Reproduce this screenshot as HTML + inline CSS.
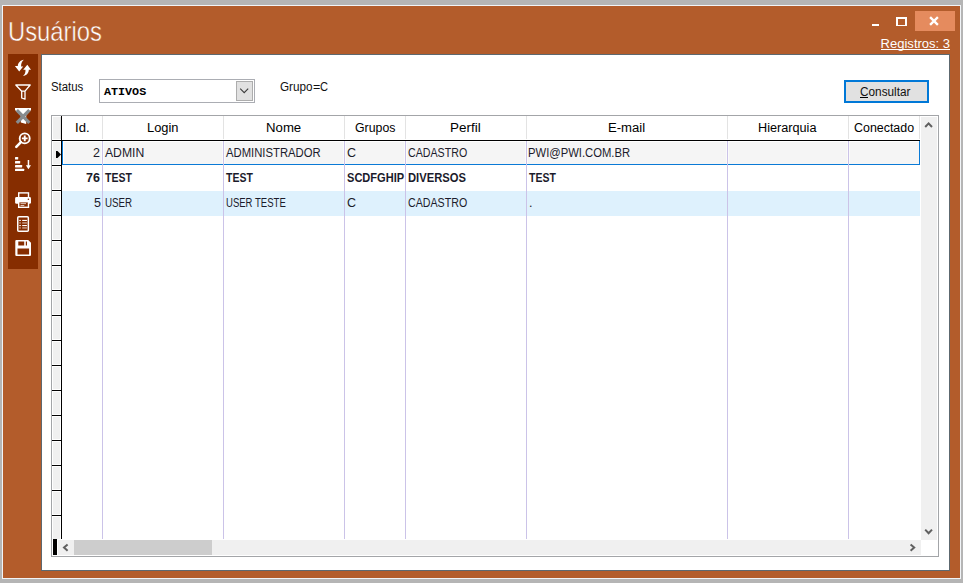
<!DOCTYPE html>
<html><head><meta charset="utf-8"><style>
html,body{margin:0;padding:0;width:963px;height:583px;overflow:hidden;background:#b5b5b5}
svg{display:block;font-family:"Liberation Sans",sans-serif}
text{white-space:pre}
</style></head><body>
<svg width="963" height="583" viewBox="0 0 963 583">
<defs><clipPath id="cg"><rect x="345" y="160" width="59" height="30"/></clipPath></defs>
<rect x="0" y="0" width="963" height="583" fill="#b5b5b5" />
<rect x="2" y="5" width="959" height="574" fill="#f1f4f7" />
<rect x="3" y="6" width="957" height="572" fill="#b35c2b" />
<rect x="872" y="24" width="7" height="2" fill="#fff" />
<rect x="896" y="17" width="11" height="9" fill="#fff" />
<rect x="898" y="19" width="7" height="6" fill="#b35c2b" />
<rect x="915" y="11" width="40" height="20" fill="#e58b5e" />
<path d="M930.9 17.9L937.1 24.1M937.1 17.9L930.9 24.1" stroke="#fff" stroke-width="2.3" stroke-linecap="square"/>
<rect x="881" y="49" width="69" height="1" fill="#fff" />
<rect x="8" y="54" width="30" height="215" fill="#862d00" />
<g fill="#fff"><path d="M23.8 59.8C20.4 60.3 17.9 62.9 17.8 66L14.9 66L19.2 71.6L23.2 66.4L21.1 66.4C21.0 63.6 22.0 61.3 23.8 59.8Z"/><path d="M23.0 76.0C26.6 75.5 28.8 72.9 28.8 69.7L31.0 69.7L27.3 64.8L23.2 69.7L25.5 69.7C25.6 72.4 24.8 74.6 23.0 76.0Z"/></g>
<path d="M15.8 85H30.2L25 91.2V99.2L21.7 98V91.2Z M21.7 91.2H25" fill="none" stroke="#fff" stroke-width="1.3" stroke-linejoin="round"/>
<path d="M15 108H31V110L26.2 115.5V124L20.8 122.5V115.5L15 110Z" fill="#fff"/>
<path d="M16.8 110.2L29.4 122.8M29.4 110.2L16.8 122.8" stroke="#878c8f" stroke-width="3.3"/>
<circle cx="24.7" cy="138.4" r="5" fill="none" stroke="#fff" stroke-width="1.9"/><path d="M21.9 138.4H27.6M24.75 135.6V141.2" stroke="#fff" stroke-width="1.9"/><path d="M20.9 142.2L16.3 146.8" stroke="#fff" stroke-width="2.6" stroke-linecap="round"/>
<g fill="#fff"><rect x="15" y="157" width="3.2" height="2.6" rx="0.6"/><rect x="15" y="161" width="5.2" height="2.6" rx="0.6"/><rect x="15" y="164.9" width="7.2" height="2.5" rx="0.6"/><rect x="15" y="168.7" width="9.2" height="2.4" rx="0.6"/><rect x="27.7" y="160" width="1.5" height="6"/><path d="M25.9 165.3H31L28.45 169.2Z"/></g>
<g><rect x="18.7" y="192.9" width="9.8" height="5" fill="none" stroke="#fff" stroke-width="1.4"/><rect x="15.1" y="197" width="15.9" height="6.8" rx="1.4" fill="#fff"/><rect x="18.7" y="201.7" width="9.8" height="5.6" fill="#862d00" stroke="#fff" stroke-width="1.4"/><rect x="20.5" y="203.2" width="5.5" height="0.9" fill="#fff" opacity="0.8"/><rect x="20.5" y="205" width="3.8" height="0.9" fill="#fff" opacity="0.8"/><circle cx="28.4" cy="199.2" r="0.8" fill="#862d00"/></g>
<g><rect x="17.75" y="216.75" width="10.6" height="14.6" rx="1" fill="none" stroke="#fff" stroke-width="1.5"/><g fill="#fff"><rect x="19.3" y="219.9" width="1.5" height="1.1"/><rect x="22.2" y="219.9" width="4.7" height="1.1"/><rect x="19.3" y="222.4" width="1.5" height="1.1" opacity="0.7"/><rect x="22.2" y="222.4" width="4.7" height="1.1" opacity="0.7"/><rect x="19.3" y="225" width="1.5" height="1.1"/><rect x="22.2" y="225" width="4.7" height="1.1"/><rect x="19.3" y="227.4" width="1.5" height="1.1" opacity="0.7"/><rect x="22.2" y="227.4" width="4.7" height="1.1" opacity="0.7"/></g></g>
<path fill="#fff" fill-rule="evenodd" d="M15.3 241.1Q15.3 240 16.4 240H28.2L31 242.8V254.9Q31 256 29.9 256H16.4Q15.3 256 15.3 254.9ZM18.3 241.4H24.2V245.6H18.3Z M25.8 241.4H27V245.6H25.8Z M17.5 248.4H29.1V254.6H17.5Z"/>
<rect x="41" y="54" width="909" height="517" fill="#5d686f" />
<rect x="42" y="55" width="907" height="515" fill="#ffffff" />
<rect x="99" y="79" width="156" height="24" fill="#abadb3" />
<rect x="100" y="80" width="154" height="22" fill="#fff" />
<rect x="236" y="81" width="17" height="20" fill="#adadad" />
<rect x="237" y="82" width="15" height="18" fill="#e1e1e1" />
<path d="M240.2 88.6L244.2 92.6L248.2 88.6" fill="none" stroke="#3c3c3c" stroke-width="1.1"/>
<rect x="844" y="80" width="85" height="23" fill="#0078d7" />
<rect x="846" y="82" width="81" height="19" fill="#e1e1e1" />
<rect x="860" y="97" width="8" height="1" fill="#000" />
<rect x="51" y="115" width="888" height="442" fill="#a3a5a8" />
<rect x="52" y="116" width="886" height="440" fill="#ffffff" />
<rect x="62" y="141" width="858" height="24" fill="#0a7ad6" />
<rect x="63" y="141" width="856" height="23" fill="#ffffff" />
<rect x="64" y="142" width="855" height="22" fill="#f5f5f5" />
<rect x="101" y="142" width="3" height="22" fill="#fbfbfb" />
<rect x="222" y="142" width="3" height="22" fill="#fbfbfb" />
<rect x="343" y="142" width="3" height="22" fill="#fbfbfb" />
<rect x="404" y="142" width="3" height="22" fill="#fbfbfb" />
<rect x="525" y="142" width="3" height="22" fill="#fbfbfb" />
<rect x="726" y="142" width="3" height="22" fill="#fbfbfb" />
<rect x="847" y="142" width="3" height="22" fill="#fbfbfb" />
<rect x="62" y="164" width="858" height="1" fill="#0a7ad6" />
<rect x="62" y="141" width="1" height="24" fill="#0a7ad6" />
<rect x="919" y="141" width="1" height="24" fill="#0a7ad6" />
<rect x="62" y="191" width="858" height="25" fill="#def1fd" />
<rect x="102" y="116" width="1" height="23" fill="#e3e3e3" />
<rect x="223" y="116" width="1" height="23" fill="#e3e3e3" />
<rect x="344" y="116" width="1" height="23" fill="#e3e3e3" />
<rect x="405" y="116" width="1" height="23" fill="#e3e3e3" />
<rect x="526" y="116" width="1" height="23" fill="#e3e3e3" />
<rect x="727" y="116" width="1" height="23" fill="#e3e3e3" />
<rect x="848" y="116" width="1" height="23" fill="#e3e3e3" />
<rect x="919" y="116" width="1" height="23" fill="#e3e3e3" />
<rect x="102" y="141" width="1" height="398" fill="#cbc3e8" />
<rect x="223" y="141" width="1" height="398" fill="#cbc3e8" />
<rect x="344" y="141" width="1" height="398" fill="#cbc3e8" />
<rect x="405" y="141" width="1" height="398" fill="#cbc3e8" />
<rect x="526" y="141" width="1" height="398" fill="#cbc3e8" />
<rect x="727" y="141" width="1" height="398" fill="#cbc3e8" />
<rect x="848" y="141" width="1" height="398" fill="#cbc3e8" />
<rect x="52" y="116" width="9" height="24" fill="#ffffff" />
<rect x="53" y="117" width="7" height="22" fill="#f0f0f0" />
<rect x="60" y="117" width="1" height="22" fill="#e2e2e2" />
<rect x="52" y="141" width="9" height="24" fill="#ffffff" />
<rect x="53" y="142" width="7" height="22" fill="#f0f0f0" />
<rect x="52" y="165" width="9" height="1" fill="#000" />
<rect x="52" y="166" width="9" height="24" fill="#ffffff" />
<rect x="53" y="167" width="7" height="22" fill="#f0f0f0" />
<rect x="52" y="190" width="9" height="1" fill="#000" />
<rect x="52" y="191" width="9" height="24" fill="#ffffff" />
<rect x="53" y="192" width="7" height="22" fill="#f0f0f0" />
<rect x="52" y="215" width="9" height="1" fill="#000" />
<rect x="52" y="216" width="9" height="24" fill="#ffffff" />
<rect x="53" y="217" width="7" height="22" fill="#f0f0f0" />
<rect x="52" y="240" width="9" height="1" fill="#000" />
<rect x="52" y="241" width="9" height="24" fill="#ffffff" />
<rect x="53" y="242" width="7" height="22" fill="#f0f0f0" />
<rect x="52" y="265" width="9" height="1" fill="#000" />
<rect x="52" y="266" width="9" height="24" fill="#ffffff" />
<rect x="53" y="267" width="7" height="22" fill="#f0f0f0" />
<rect x="52" y="290" width="9" height="1" fill="#000" />
<rect x="52" y="291" width="9" height="24" fill="#ffffff" />
<rect x="53" y="292" width="7" height="22" fill="#f0f0f0" />
<rect x="52" y="315" width="9" height="1" fill="#000" />
<rect x="52" y="316" width="9" height="24" fill="#ffffff" />
<rect x="53" y="317" width="7" height="22" fill="#f0f0f0" />
<rect x="52" y="340" width="9" height="1" fill="#000" />
<rect x="52" y="341" width="9" height="24" fill="#ffffff" />
<rect x="53" y="342" width="7" height="22" fill="#f0f0f0" />
<rect x="52" y="365" width="9" height="1" fill="#000" />
<rect x="52" y="366" width="9" height="24" fill="#ffffff" />
<rect x="53" y="367" width="7" height="22" fill="#f0f0f0" />
<rect x="52" y="390" width="9" height="1" fill="#000" />
<rect x="52" y="391" width="9" height="24" fill="#ffffff" />
<rect x="53" y="392" width="7" height="22" fill="#f0f0f0" />
<rect x="52" y="415" width="9" height="1" fill="#000" />
<rect x="52" y="416" width="9" height="24" fill="#ffffff" />
<rect x="53" y="417" width="7" height="22" fill="#f0f0f0" />
<rect x="52" y="440" width="9" height="1" fill="#000" />
<rect x="52" y="441" width="9" height="24" fill="#ffffff" />
<rect x="53" y="442" width="7" height="22" fill="#f0f0f0" />
<rect x="52" y="465" width="9" height="1" fill="#000" />
<rect x="52" y="466" width="9" height="24" fill="#ffffff" />
<rect x="53" y="467" width="7" height="22" fill="#f0f0f0" />
<rect x="52" y="490" width="9" height="1" fill="#000" />
<rect x="52" y="491" width="9" height="24" fill="#ffffff" />
<rect x="53" y="492" width="7" height="22" fill="#f0f0f0" />
<rect x="52" y="515" width="9" height="1" fill="#000" />
<rect x="52" y="516" width="9" height="23" fill="#ffffff" />
<rect x="53" y="517" width="7" height="22" fill="#f0f0f0" />
<rect x="61" y="116" width="1" height="423" fill="#000" />
<rect x="52" y="140" width="868" height="1" fill="#000" />
<path d="M56 151H57.5L61 154.5L57.5 158H56Z" fill="#000"/>
<rect x="921" y="117" width="16" height="423" fill="#f0f0f0" />
<path d="M925.2 127L928.6 123.4L932 127" fill="none" stroke="#606060" stroke-width="2"/>
<path d="M925.2 529.6L928.6 533.2L932 529.6" fill="none" stroke="#606060" stroke-width="2"/>
<rect x="58" y="540" width="863" height="15" fill="#f0f0f0" />
<rect x="74" y="540" width="138" height="15" fill="#cdcdcd" />
<path d="M67.6 544.4L64 547.6L67.6 550.8" fill="none" stroke="#606060" stroke-width="2"/>
<path d="M910.6 544.4L914.2 547.6L910.6 550.8" fill="none" stroke="#606060" stroke-width="2"/>
<rect x="53" y="539" width="4" height="16" fill="#000" />
<text x="8.00" y="41" font-family="Liberation Sans" font-size="27.5" font-weight="normal" fill="#fff" textLength="93.99" lengthAdjust="spacingAndGlyphs" stroke="#b35c2b" stroke-width="0.5">Usuários</text>
<text x="880.60" y="48" font-family="Liberation Sans" font-size="12.5" font-weight="normal" fill="#fff" textLength="69.47" lengthAdjust="spacingAndGlyphs">Registros: 3</text>
<text x="51.00" y="91" font-family="Liberation Sans" font-size="12.5" font-weight="normal" fill="#111" textLength="32.31" lengthAdjust="spacingAndGlyphs">Status</text>
<text x="104.00" y="95" font-family="Liberation Mono" font-size="11.8" font-weight="bold" fill="#000" textLength="42.19" lengthAdjust="spacingAndGlyphs">ATIVOS</text>
<text x="280.00" y="91" font-family="Liberation Sans" font-size="12.5" font-weight="normal" fill="#111" textLength="32.60" lengthAdjust="spacingAndGlyphs">Grupo</text>
<text x="313.00" y="91" font-family="Liberation Sans" font-size="12.5" font-weight="normal" fill="#111">=</text>
<text x="320.10" y="91" font-family="Liberation Sans" font-size="12.5" font-weight="normal" fill="#111" textLength="8.00" lengthAdjust="spacingAndGlyphs">C</text>
<text x="860.00" y="96" font-family="Liberation Sans" font-size="12.5" font-weight="normal" fill="#111" textLength="50.47" lengthAdjust="spacingAndGlyphs">Consultar</text>
<text x="75.00" y="132" font-family="Liberation Sans" font-size="12" font-weight="normal" fill="#000" textLength="14.56" lengthAdjust="spacingAndGlyphs">Id.</text>
<text x="147.00" y="132" font-family="Liberation Sans" font-size="12" font-weight="normal" fill="#000" textLength="31.55" lengthAdjust="spacingAndGlyphs">Login</text>
<text x="266.00" y="132" font-family="Liberation Sans" font-size="12" font-weight="normal" fill="#000" textLength="35.22" lengthAdjust="spacingAndGlyphs">Nome</text>
<text x="355.00" y="132" font-family="Liberation Sans" font-size="12" font-weight="normal" fill="#000" textLength="40.40" lengthAdjust="spacingAndGlyphs">Grupos</text>
<text x="450.00" y="132" font-family="Liberation Sans" font-size="12" font-weight="normal" fill="#000" textLength="30.62" lengthAdjust="spacingAndGlyphs">Perfil</text>
<text x="608.00" y="132" font-family="Liberation Sans" font-size="12" font-weight="normal" fill="#000" textLength="37.20" lengthAdjust="spacingAndGlyphs">E-mail</text>
<text x="758.00" y="132" font-family="Liberation Sans" font-size="12" font-weight="normal" fill="#000" textLength="58.43" lengthAdjust="spacingAndGlyphs">Hierarquia</text>
<text x="854.00" y="132" font-family="Liberation Sans" font-size="12" font-weight="normal" fill="#000" textLength="60.08" lengthAdjust="spacingAndGlyphs">Conectado</text>
<text x="93.00" y="157" font-family="Liberation Sans" font-size="12.5" font-weight="normal" fill="#1b1b2b">2</text>
<text x="105.00" y="157" font-family="Liberation Sans" font-size="12.5" font-weight="normal" fill="#1b1b2b" textLength="39.25" lengthAdjust="spacingAndGlyphs">ADMIN</text>
<text x="226.00" y="157" font-family="Liberation Sans" font-size="12.5" font-weight="normal" fill="#1b1b2b" textLength="94.69" lengthAdjust="spacingAndGlyphs">ADMINISTRADOR</text>
<text x="347.00" y="157" font-family="Liberation Sans" font-size="12.5" font-weight="normal" fill="#1b1b2b">C</text>
<text x="408.00" y="157" font-family="Liberation Sans" font-size="12.5" font-weight="normal" fill="#1b1b2b" textLength="59.24" lengthAdjust="spacingAndGlyphs">CADASTRO</text>
<text x="528.00" y="157" font-family="Liberation Sans" font-size="12.5" font-weight="normal" fill="#1b1b2b" textLength="102.15" lengthAdjust="spacingAndGlyphs">PWI@PWI.COM.BR</text>
<text x="86.00" y="182" font-family="Liberation Sans" font-size="12.5" font-weight="bold" fill="#1b1b2b">76</text>
<text x="105.00" y="182" font-family="Liberation Sans" font-size="12.5" font-weight="bold" fill="#1b1b2b" textLength="26.80" lengthAdjust="spacingAndGlyphs">TEST</text>
<text x="226.00" y="182" font-family="Liberation Sans" font-size="12.5" font-weight="bold" fill="#1b1b2b" textLength="26.80" lengthAdjust="spacingAndGlyphs">TEST</text>
<text x="347.00" y="182" font-family="Liberation Sans" font-size="12.5" font-weight="bold" fill="#1b1b2b" textLength="57.14" lengthAdjust="spacingAndGlyphs">SCDFGHIP</text>
<text x="408.00" y="182" font-family="Liberation Sans" font-size="12.5" font-weight="bold" fill="#1b1b2b" textLength="58.00" lengthAdjust="spacingAndGlyphs">DIVERSOS</text>
<text x="529.00" y="182" font-family="Liberation Sans" font-size="12.5" font-weight="bold" fill="#1b1b2b" textLength="26.80" lengthAdjust="spacingAndGlyphs">TEST</text>
<text x="94.00" y="207" font-family="Liberation Sans" font-size="12.5" font-weight="normal" fill="#1b1b2b">5</text>
<text x="105.00" y="207" font-family="Liberation Sans" font-size="12.5" font-weight="normal" fill="#1b1b2b" textLength="27.18" lengthAdjust="spacingAndGlyphs">USER</text>
<text x="226.00" y="207" font-family="Liberation Sans" font-size="12.5" font-weight="normal" fill="#1b1b2b" textLength="59.75" lengthAdjust="spacingAndGlyphs">USER TESTE</text>
<text x="347.00" y="207" font-family="Liberation Sans" font-size="12.5" font-weight="normal" fill="#1b1b2b">C</text>
<text x="408.00" y="207" font-family="Liberation Sans" font-size="12.5" font-weight="normal" fill="#1b1b2b" textLength="59.24" lengthAdjust="spacingAndGlyphs">CADASTRO</text>
<text x="529.00" y="207" font-family="Liberation Sans" font-size="12.5" font-weight="normal" fill="#1b1b2b">.</text>
</svg></body></html>
